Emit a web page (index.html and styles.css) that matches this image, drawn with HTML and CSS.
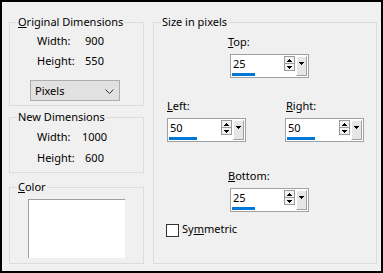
FILE: index.html
```html
<!DOCTYPE html>
<html>
<head>
<meta charset="utf-8">
<link rel="stylesheet" href="styles.css">
</head>
<body>
<div class="window">
  <div class="left-col">
    <div class="group g-orig">
      <span class="legend"><u>O</u>riginal Dimensions</span>
      <div class="dim-row"><span class="dim-label">Width:</span><span class="dim-value">900</span></div>
      <div class="dim-row"><span class="dim-label">Height:</span><span class="dim-value">550</span></div>
      <div class="select">
        <span>Pixels</span>
        <svg width="9" height="5" viewBox="0 0 9 5"><polyline points="0.5,0.5 4.5,4.5 8.5,0.5" fill="none" stroke="#333" stroke-width="1"/></svg>
      </div>
    </div>
    <div class="group g-new">
      <span class="legend">New Dimensions</span>
      <div class="dim-row"><span class="dim-label">Width:</span><span class="dim-value">1000</span></div>
      <div class="dim-row"><span class="dim-label">Height:</span><span class="dim-value">600</span></div>
    </div>
    <div class="group g-color">
      <span class="legend"><u>C</u>olor</span>
      <div class="swatch"></div>
    </div>
  </div>
  <div class="group g-size">
    <span class="legend">Size in pixels</span>
    <div class="row row-top">
      <div class="field f-top">
        <span class="field-label"><u>T</u>op:</span>
        <div class="spin">
          <div class="edit"><span class="val">25</span><span class="bar" style="width:23px"></span></div>
          <div class="arrows">
            <span class="arr"><svg width="5" height="3" viewBox="0 0 5 3"><rect x="2" y="0" width="1" height="1"/><rect x="1" y="1" width="3" height="1"/><rect x="0" y="2" width="5" height="1"/></svg></span>
            <span class="arr"><svg width="5" height="3" viewBox="0 0 5 3"><rect x="0" y="0" width="5" height="1"/><rect x="1" y="1" width="3" height="1"/><rect x="2" y="2" width="1" height="1"/></svg></span>
          </div>
          <span class="drop"><svg width="5" height="3" viewBox="0 0 5 3"><rect x="0" y="0" width="5" height="1"/><rect x="1" y="1" width="3" height="1"/><rect x="2" y="2" width="1" height="1"/></svg></span>
        </div>
      </div>
    </div>
    <div class="row row-mid">
      <div class="field f-left">
        <span class="field-label"><u>L</u>eft:</span>
        <div class="spin">
          <div class="edit"><span class="val">50</span><span class="bar" style="width:28px"></span></div>
          <div class="arrows">
            <span class="arr"><svg width="5" height="3" viewBox="0 0 5 3"><rect x="2" y="0" width="1" height="1"/><rect x="1" y="1" width="3" height="1"/><rect x="0" y="2" width="5" height="1"/></svg></span>
            <span class="arr"><svg width="5" height="3" viewBox="0 0 5 3"><rect x="0" y="0" width="5" height="1"/><rect x="1" y="1" width="3" height="1"/><rect x="2" y="2" width="1" height="1"/></svg></span>
          </div>
          <span class="drop"><svg width="5" height="3" viewBox="0 0 5 3"><rect x="0" y="0" width="5" height="1"/><rect x="1" y="1" width="3" height="1"/><rect x="2" y="2" width="1" height="1"/></svg></span>
        </div>
      </div>
      <div class="field f-right">
        <span class="field-label"><u>R</u>ight:</span>
        <div class="spin">
          <div class="edit"><span class="val">50</span><span class="bar" style="width:28px"></span></div>
          <div class="arrows">
            <span class="arr"><svg width="5" height="3" viewBox="0 0 5 3"><rect x="2" y="0" width="1" height="1"/><rect x="1" y="1" width="3" height="1"/><rect x="0" y="2" width="5" height="1"/></svg></span>
            <span class="arr"><svg width="5" height="3" viewBox="0 0 5 3"><rect x="0" y="0" width="5" height="1"/><rect x="1" y="1" width="3" height="1"/><rect x="2" y="2" width="1" height="1"/></svg></span>
          </div>
          <span class="drop"><svg width="5" height="3" viewBox="0 0 5 3"><rect x="0" y="0" width="5" height="1"/><rect x="1" y="1" width="3" height="1"/><rect x="2" y="2" width="1" height="1"/></svg></span>
        </div>
      </div>
    </div>
    <div class="row row-bottom">
      <div class="field f-bottom">
        <span class="field-label"><u>B</u>ottom:</span>
        <div class="spin">
          <div class="edit"><span class="val">25</span><span class="bar" style="width:23px"></span></div>
          <div class="arrows">
            <span class="arr"><svg width="5" height="3" viewBox="0 0 5 3"><rect x="2" y="0" width="1" height="1"/><rect x="1" y="1" width="3" height="1"/><rect x="0" y="2" width="5" height="1"/></svg></span>
            <span class="arr"><svg width="5" height="3" viewBox="0 0 5 3"><rect x="0" y="0" width="5" height="1"/><rect x="1" y="1" width="3" height="1"/><rect x="2" y="2" width="1" height="1"/></svg></span>
          </div>
          <span class="drop"><svg width="5" height="3" viewBox="0 0 5 3"><rect x="0" y="0" width="5" height="1"/><rect x="1" y="1" width="3" height="1"/><rect x="2" y="2" width="1" height="1"/></svg></span>
        </div>
      </div>
    </div>
    <div class="row row-check">
      <span class="checkbox"></span>
      <span class="check-label">Sy<u>m</u>metric</span>
    </div>
  </div>
</div>
</body>
</html>
```

FILE: styles.css
```css
* { box-sizing: border-box; }
html, body { margin: 0; padding: 0; }
body {
  font-family: "Noto Sans", sans-serif;
  font-size: 11px;
  line-height: 16px;
  color: #000;
  background: #fff;
}
u { text-decoration: underline; text-underline-offset: 1px; }

.window {
  width: 383px;
  height: 273px;
  border: 2px solid #000;
  background: #f0f0f0;
  display: flex;
  gap: 9px;
  padding: 20px 4px 7px 7px;
}

.left-col {
  width: 135px;
  display: flex;
  flex-direction: column;
}

.group {
  position: relative;
  border: 1px solid #dcdcdc;
}
.legend {
  position: absolute;
  top: -9px;
  left: 7px;
  padding: 0 1px;
  background: #f0f0f0;
  line-height: 16px;
  white-space: nowrap;
}

.g-orig { height: 84px; padding-top: 10px; }
.g-new { height: 56px; margin-top: 11px; padding-top: 11px; }
.g-color { height: 77px; margin-top: 14px; }

.dim-row { display: flex; height: 16px; }
.g-orig .dim-row + .dim-row { margin-top: 4px; }
.g-new .dim-row + .dim-row { margin-top: 5px; }
.dim-label { margin-left: 27px; width: 43px; }
.dim-value { width: 29px; text-align: center; }

.select {
  margin: 11px 0 0 20px;
  width: 90px;
  height: 21px;
  border: 1px solid #adadad;
  background: #e1e1e1;
  display: flex;
  align-items: center;
  justify-content: space-between;
  padding: 0 5px 0 4px;
}
.select svg { display: block; margin-top: 1px; }

.swatch {
  margin: 11px 0 0 18px;
  width: 97px;
  height: 59px;
  background: #fff;
  border-top: 1px solid #a0a0a0;
  border-left: 1px solid #a0a0a0;
}

.g-size {
  width: 224px;
  height: 242px;
  padding-top: 11px;
  display: flex;
  flex-direction: column;
}

.row { display: flex; }
.row-top { margin-left: 76px; }
.row-mid { margin-top: 20px; padding-left: 13px; gap: 39px; }
.row-bottom { margin-top: 26px; margin-left: 76px; }
.row-check { margin-top: 9px; margin-left: 12px; align-items: flex-start; }

.field { display: flex; flex-direction: column; gap: 4px; }
.field-label { height: 16px; }
.f-top .field-label, .f-bottom .field-label { margin-left: -2px; }
.f-right .field-label { margin-left: 1px; }

.spin {
  width: 79px;
  height: 24px;
  border: 1px solid #a2a2a2;
  background: #fff;
  display: flex;
  align-items: flex-start;
}
.edit {
  flex: 1;
  display: flex;
  flex-direction: column;
  padding: 1px 0 0 2px;
}
.val { height: 16px; }
.bar {
  display: block;
  height: 3px;
  margin: 1px 0 0 -1px;
  background: #0078d7;
}
.arrows {
  width: 11px;
  margin-top: 1px;
  display: flex;
  flex-direction: column;
}
.arr {
  height: 8px;
  border: 1px solid #9a9a9a;
  background: #f2f2f2;
  display: flex;
  align-items: center;
  justify-content: center;
}
.arr + .arr { margin-top: -1px; }
.arr svg, .drop svg { display: block; fill: #000; }
.drop {
  width: 11px;
  height: 20px;
  margin: 1px 1px 0 1px;
  background: #e6e6e6;
  border-top: 1px solid #fff;
  border-left: 1px solid #fff;
  border-right: 1px solid #a0a0a0;
  border-bottom: 1px solid #a0a0a0;
  display: flex;
  justify-content: center;
  padding-top: 5px;
}

.checkbox {
  width: 13px;
  height: 13px;
  margin-top: 3px;
  border: 1px solid #333;
  background: #fff;
}
.check-label { margin-left: 3px; }
```
